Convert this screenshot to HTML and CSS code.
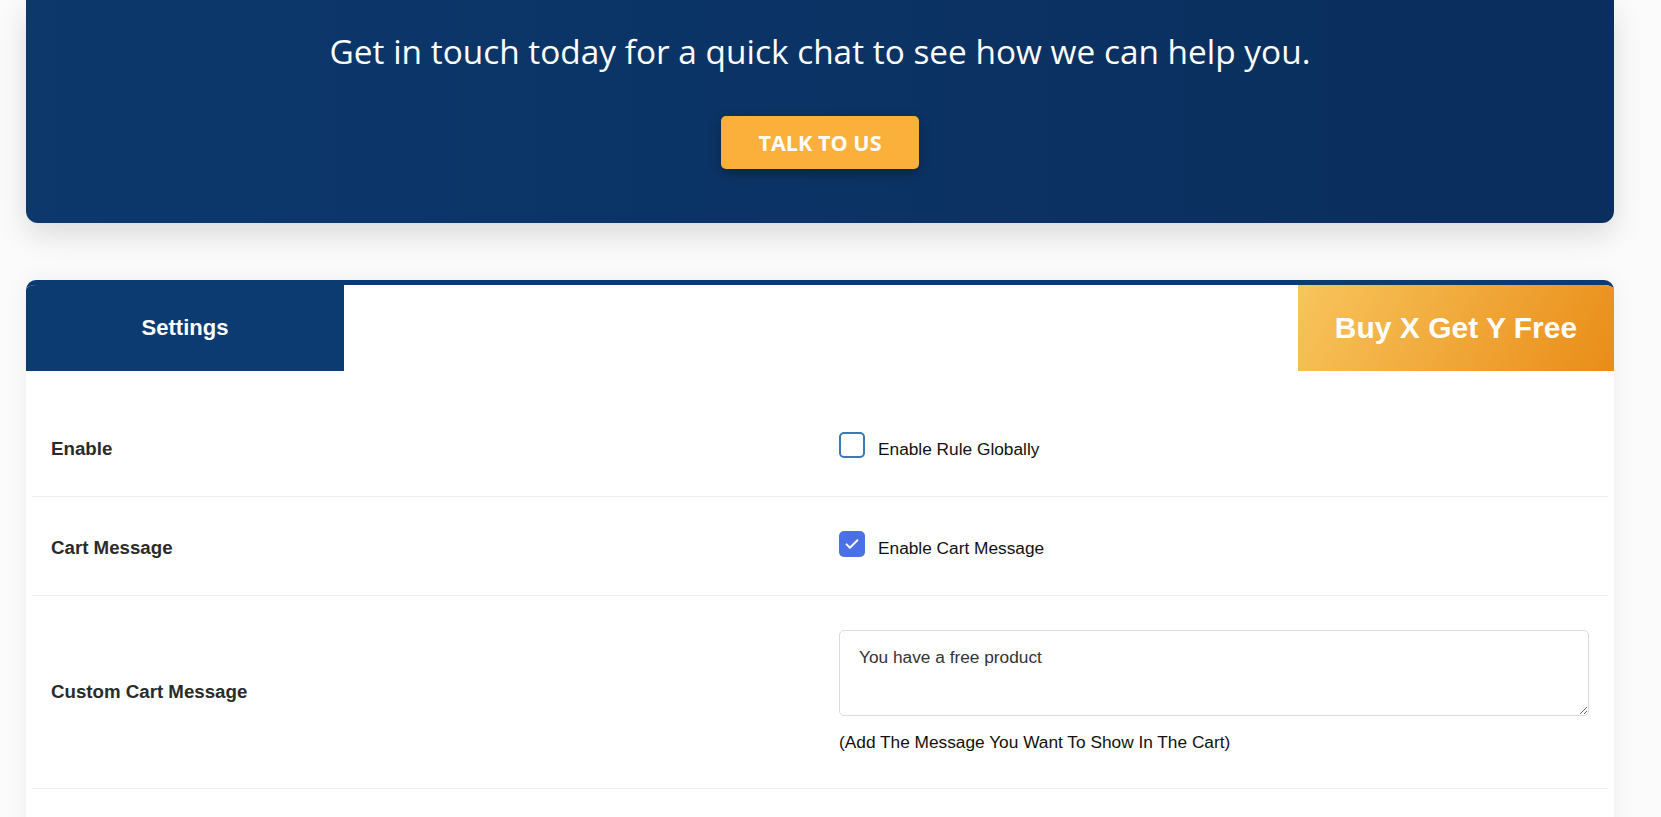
FILE: index.html
```html
<!DOCTYPE html>
<html lang="en">
<head>
    <meta charset="UTF-8">
    <meta name="viewport" content="width=device-width, initial-scale=1.0">
    <title>Buy X Get Y Free - Settings</title>
    <link rel="stylesheet" href="styles.css">
</head>
<body>
    <div class="page">
        <!-- Contact banner -->
        <section class="cta">
            <p class="cta-text">Get in touch today for a quick chat to see how we can help you.</p>
            <a href="#" class="cta-button">TALK TO US</a>
        </section>

        <!-- Settings panel -->
        <section class="panel">
            <div class="panel-head">
                <div class="tab-settings">Settings</div>
                <div class="tab-title">Buy X Get Y Free</div>
            </div>

            <div class="settings-table">
                <div class="row">
                    <div class="row-label">Enable</div>
                    <div class="row-field">
                        <label class="check">
                            <input type="checkbox">
                            <span class="box"></span>
                            Enable Rule Globally
                        </label>
                    </div>
                </div>

                <div class="row">
                    <div class="row-label">Cart Message</div>
                    <div class="row-field">
                        <label class="check">
                            <input type="checkbox" checked>
                            <span class="box box-checked">
                                <svg viewBox="0 0 24 24" width="20" height="20"><path d="M5.5 12.5l4 4L18.5 7.5" fill="none" stroke="#fff" stroke-width="2.4" stroke-linecap="round" stroke-linejoin="round"/></svg>
                            </span>
                            Enable Cart Message
                        </label>
                    </div>
                </div>

                <div class="row row-tall">
                    <div class="row-label">Custom Cart Message</div>
                    <div class="row-field">
                        <textarea class="message-input">You have a free product</textarea>
                        <p class="help">(Add The Message You Want To Show In The Cart)</p>
                    </div>
                </div>

                <div class="row row-empty"></div>
            </div>
        </section>
    </div>
</body>
</html>
```

FILE: styles.css
```css
:root {
    --navy: #0c3b72;
    --orange: #fbb03b;
    --line: #efefef;
}

body {
    margin: 0;
    font-family: 'Liberation Sans', Arial, sans-serif;
    background: #fbfbfb;
    overflow: hidden;
}

.page {
    width: 1588px;
    margin-left: 26px;
}

/* Contact banner */
.cta {
    padding: 24px 20px 54px;
    text-align: center;
    background: linear-gradient(90deg, #0c386c, #0a2e5d);
    border-radius: 0 0 12px 12px;
    box-shadow: 0 12px 30px rgba(0, 0, 0, 0.13);
}

.cta-text {
    margin: 0;
    color: white;
    font-family: 'Open Sans', sans-serif;
    font-size: 33.4px;
    line-height: 54px;
}

.cta-button {
    display: inline-block;
    margin-top: 38px;
    width: 198px;
    height: 53px;
    line-height: 53px;
    background: var(--orange);
    color: white;
    text-decoration: none;
    font-family: 'Open Sans', sans-serif;
    font-weight: 700;
    font-size: 21.6px;
    border-radius: 5px;
    box-shadow: 0 4px 12px rgba(0, 0, 0, 0.3);
}

/* Settings panel */
.panel {
    margin-top: 57px;
    background: white;
    border-top: 5px solid var(--navy);
    border-radius: 10px 10px 0 0;
    overflow: hidden;
    box-shadow: 0 0 22px rgba(0, 0, 0, 0.06);
}

.panel-head {
    display: flex;
    justify-content: space-between;
    height: 86px;
}

.tab-settings {
    width: 318px;
    display: flex;
    align-items: center;
    justify-content: center;
    background: var(--navy);
    color: white;
    font-weight: 700;
    font-size: 22px;
}

.tab-title {
    width: 316px;
    display: flex;
    align-items: center;
    justify-content: center;
    background: linear-gradient(120deg, #f8c55d, #e98c17);
    color: white;
    font-weight: 700;
    font-size: 30px;
}

.settings-table {
    margin: 27px 6px 0;
}

.row {
    display: grid;
    grid-template-columns: 1fr 1fr;
    align-items: center;
    border-bottom: 1px solid var(--line);
}

.row-label,
.row-field {
    padding: 40px 19px 36px;
}

.row-tall .row-label,
.row-tall .row-field {
    padding: 36px 19px;
}

.row-label {
    color: #2b2b2b;
    font-weight: 700;
    font-size: 18.7px;
}

.row-field {
    color: #111;
    font-size: 17.3px;
    line-height: 20px;
}

.row-empty {
    height: 80px;
    border-bottom: none;
}

/* Checkboxes */
.check {
    display: flex;
    align-items: center;
    gap: 13px;
    cursor: pointer;
}

.check input {
    display: none;
}

.box {
    box-sizing: border-box;
    width: 26px;
    height: 26px;
    margin-top: -8px;
    border: 2px solid #3d78b6;
    border-radius: 5px;
    display: flex;
    align-items: center;
    justify-content: center;
}

.box-checked {
    border: none;
    background: #4b6fe6;
}

/* Message field */
.message-input {
    display: block;
    box-sizing: border-box;
    width: 100%;
    height: 86px;
    margin-top: -2px;
    padding: 14px 19px;
    border: 1px solid #dcdcde;
    border-radius: 5px;
    font-family: 'Liberation Sans', Arial, sans-serif;
    font-size: 17.3px;
    line-height: 24px;
    color: #333;
    resize: vertical;
}

.help {
    margin: 16px 0 0;
    line-height: 20px;
}
```
